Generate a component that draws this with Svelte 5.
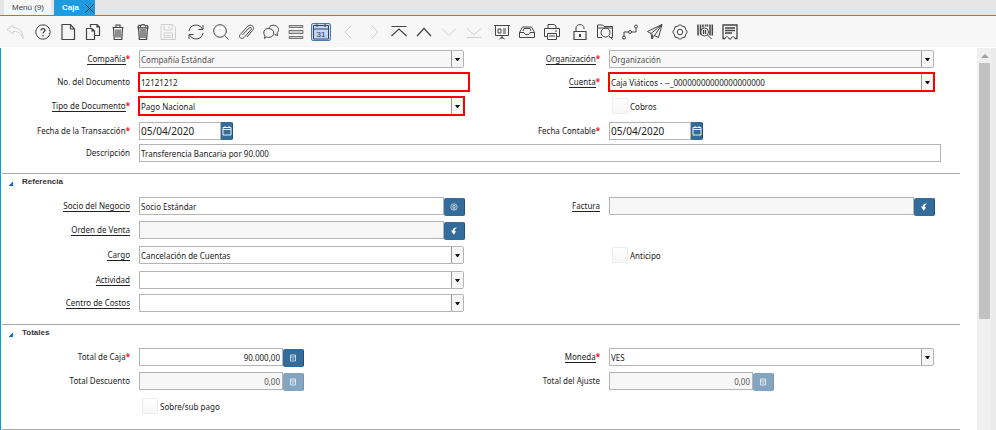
<script lang="ts">
type Field = {
	id: string;
	kind: 'combo' | 'text' | 'date' | 'check' | 'search' | 'amount';
	label: string;
	value?: string;
	link?: boolean;
	required?: boolean;
	disabled?: boolean;
	marked?: boolean;
	wide?: boolean;
	icon?: string;
};

type Section = { name: string; title?: string; rows: (Field | null)[][] };

type Tool = { name: string; icon: string; disabled?: boolean; active?: boolean };

const icons: Record<string, string> = {
	undo: '<path d="M6 1 0 5.500 6 10V7.500C11 7 14 9 16 15 16.500 8 12 3.500 6 3.500z"/>',
	help: '<circle cx="8" cy="8" r="7.200"/><path d="M6 6.500C6 4 10 4 10 6.300 10 8 8 7.700 8 9.500M8 11v1.300" stroke-width="1.300"/>',
	file: '<path d="M2 .5h8.500L14.500 5v10.500H2zM10.500 .5V5h4" stroke-width="1.200"/>',
	copy: '<path d="M5.500 3.500V.5H12L14.500 3v8.500H10M12 .5V3h2.500M1.500 4.500H7L9.500 7v8.500h-8zM7 4.500V7h2.500" stroke-width="1.200"/>',
	trash: '<path d="M2.500 3.500h11M6 3V1h4v2M3.500 4l.7 11.500h7.600L12.500 4M6 5.500v8M8 5.500v8M10 5.500v8" stroke-width="1.200"/>',
	trashAll: '<path d="M3 3.500C3 1 5 1 5.500 2 6 .2 10 .2 10.500 2 12 1 13 1.500 13 3.500M2.500 3.800h11M3.500 4l.9 11.500h7.200L12.500 4M6 5v9M8 5v9M10 5v9" stroke-width="1.200"/>',
	save: '<path d="M1 .5h11.500L15.500 3v12.500H1zM4 .5V6h8V.5M9 2v2.500M4 15.500V9h8.500v6.500M5 11.500h6M5 13.500h6"/>',
	refresh: '<path d="M1 7C2 0 11-1 14.500 5M15 1v4.500h-4.500M15 9C14 16 5 17 1.500 11M1 15v-4.500h4.500"/>',
	find: '<circle cx="7" cy="7" r="6.300"/><path d="m11.500 11.500 4 4"/>',
	attach: '<path d="M4.500 11 11 4c1.500-1.300 3.200.2 2 1.700L6 13.500c-2.500 2.500-6-.5-3.800-3L9.500 2.500c3.500-3.500 8 .5 5 4L9 13"/>',
	chat: '<path d="M6 4.500C6.500-.5 15.500.5 15.500 5.500c0 2-1 3-1.500 3.500l.5 2.500-3-1"/><path d="M1.500 14.500 2 12C-.5 8.500 1 4.500 5.500 4.500c7 0 7 9 0 9-1 0-1.500-.2-2-.5z"/>',
	grid: '<path d="M1 1.500h14v2H1zM1 6.500h14v3H1zM1 12.500h14v2H1z" fill="#ccc" stroke="#777" stroke-linejoin="round"/>',
	calendar: '<path d="M.5 1.500h15v13.500H.5zM.5 5h15M4 0v3M12 0v3"/><text x="8" y="13.300" font-family="Liberation Sans, sans-serif" font-size="8" text-anchor="middle" fill="#334" stroke="none">31</text>',
	prev: '<path d="M10.500 1.500 4 8l6.500 6.500"/>',
	next: '<path d="M5.500 1.500 12 8l-6.500 6.500"/>',
	first: '<path d="M.5 2.500h15M.5 12 8 5l7.500 7" stroke-width="1.200"/>',
	up: '<path d="M1 12 8 4.500l7 7.500" stroke-width="1.200"/>',
	down: '<path d="M1 4.500 8 11.500l7-7"/>',
	last: '<path d="M.5 4 8 11l7.500-7M.5 13.500h15"/>',
	report: '<path d="M0 1.500h16M1.500 1.500v10h13v-10M8 12v3M5.500 15l2.500-2 2.500 2M4 5h3v4H4zM9 5h3M9 7h3M9 9h3"/>',
	archive: '<path d="M.5 8.500 3.500 3h9l3 5.500v5H.5zM.5 8.500H5c.5 3 5.500 3 6 0h4.500M4 7l1-2.500h6L12 7"/>',
	print: '<path d="M4 4.500V.5h6L12 2v2.500M3.500 12.500h-3v-8h15v8h-3M3.500 9.500h9v6h-9zM5 12h6M11 7h2"/>',
	lock: '<path d="M4 7V4c0-4.500 8-4.500 8 0v1"/><path d="M2 7.500h12v8H2z" stroke-width="1.200"/><path d="M8 10v3" stroke-width="2"/>',
	zoom: '<path d="M.5 13.500V1h5L7 2.500h8.500v11h-3M.5 13.500H5M1 4h14"/><circle cx="8.500" cy="8.500" r="4.500"/><path d="m12 12 3.500 3.500"/>',
	workflow: '<circle cx="2" cy="13.500" r="1.500"/><circle cx="8" cy="8" r="1.500"/><circle cx="14" cy="2.500" r="1.500"/><path d="M2 12V8h4.500M9.500 8H14V4"/>',
	send: '<path d="M15 .5.500 7.500 4 9.500l1 5.500 2.500-3.500 4 2zM15 .5 4 9.500M15 .5 7.500 11.500M5 15l.5-4.500"/>',
	gear: '<circle cx="8" cy="8" r="2.700"/><path d="M8 .7 10 2.200 13 2.800 13.700 5.500 15.300 8 13.700 10.500 13 13.200 10 13.800 8 15.300 6 13.800 3 13.200 2.300 10.500.7 8 2.300 5.500 3 2.800 6 2.200z"/>',
	barcode: '<path d="M1 .5v11M3.500 .5v10M6 .5v3M8.500 .5v2M10.500 .5v2M13 .5v11M15.300 .5v11" stroke-width="1.500"/><circle cx="7.500" cy="8" r="4"/><path d="M6.500 6v4M8.500 6v4" stroke-width="1.300"/><path d="m10.500 11 4 4"/>',
	form: '<path d="M3 14.500H1V1h14v13.500h-2" stroke-width="1.300"/><path d="M3 4h10M3 6.500h10M3 9h7" stroke-width="1.300"/><path d="M3 15c0-3 4-3 4 0h2c0-3 4-3 4 0"/>'
};

const small: Record<string, string> = {
	date: '<path d="M1 1.500h8v7.500H1zM1 3.500h8M3 0v2M7 0v2" stroke-width=".9"/>',
	user: '<circle cx="5" cy="5" r="3.200" stroke-width=".6"/><path d="M4 3.500h2v2.500H4zM3.500 7h3" stroke-width=".6"/>',
	search: '<path d="M8 1.500C5 1.500 3.800 2.500 3.800 4.500H2L4.800 8.800 7 5.500 5.500 4.700C5.600 3.500 6.500 3 8 1.500z" fill="currentColor" stroke="none"/>',
	calc: '<path d="M2.500 2h5v6h-5zM2.500 4h5M4 6h2" stroke-width=".7"/>'
};

const tools: Tool[][] = [
	[{ name: 'Deshacer', icon: 'undo', disabled: true }],
	[
		{ name: 'Ayuda', icon: 'help' },
		{ name: 'Nuevo', icon: 'file' },
		{ name: 'Copiar', icon: 'copy' },
		{ name: 'Eliminar', icon: 'trash' },
		{ name: 'Eliminar selección', icon: 'trashAll' },
		{ name: 'Guardar', icon: 'save', disabled: true }
	],
	[
		{ name: 'Refrescar', icon: 'refresh' },
		{ name: 'Buscar', icon: 'find' },
		{ name: 'Adjuntos', icon: 'attach' },
		{ name: 'Chat', icon: 'chat' },
		{ name: 'Cuadrícula', icon: 'grid' },
		{ name: 'Historial', icon: 'calendar', active: true }
	],
	[
		{ name: 'Padre', icon: 'prev', disabled: true },
		{ name: 'Detalle', icon: 'next', disabled: true },
		{ name: 'Primero', icon: 'first' },
		{ name: 'Anterior', icon: 'up' },
		{ name: 'Siguiente', icon: 'down', disabled: true },
		{ name: 'Último', icon: 'last', disabled: true }
	],
	[
		{ name: 'Informe', icon: 'report' },
		{ name: 'Archivo', icon: 'archive' },
		{ name: 'Imprimir', icon: 'print' }
	],
	[
		{ name: 'Bloquear', icon: 'lock' },
		{ name: 'Visor', icon: 'zoom' },
		{ name: 'Flujo de trabajo', icon: 'workflow' },
		{ name: 'Solicitudes', icon: 'send' },
		{ name: 'Proceso', icon: 'gear' },
		{ name: 'Producto', icon: 'barcode' },
		{ name: 'Formulario', icon: 'form' }
	]
];

const sections: Section[] = [
	{
		name: 'header',
		rows: [
			[
				{ id: 'client', kind: 'combo', label: 'Compañía', value: 'Compañía Estándar', link: true, required: true, disabled: true },
				{ id: 'org', kind: 'combo', label: 'Organización', value: 'Organización', link: true, required: true, disabled: true }
			],
			[
				{ id: 'docno', kind: 'text', label: 'No. del Documento', value: '12121212', marked: true },
				{ id: 'account', kind: 'combo', label: 'Cuenta', value: 'Caja Viáticos - --_00000000000000000000', link: true, required: true, marked: true }
			],
			[
				{ id: 'doctype', kind: 'combo', label: 'Tipo de Documento', value: 'Pago Nacional', link: true, required: true, marked: true },
				{ id: 'receipt', kind: 'check', label: 'Cobros' }
			],
			[
				{ id: 'trxdate', kind: 'date', label: 'Fecha de la Transacción', value: '05/04/2020', required: true },
				{ id: 'acctdate', kind: 'date', label: 'Fecha Contable', value: '05/04/2020', required: true }
			],
			[{ id: 'description', kind: 'text', label: 'Descripción', value: 'Transferencia Bancaria por 90.000', wide: true }]
		]
	},
	{
		name: 'reference',
		title: 'Referencia',
		rows: [
			[
				{ id: 'partner', kind: 'search', label: 'Socio del Negocio', value: 'Socio Estándar', link: true, icon: 'user' },
				{ id: 'invoice', kind: 'search', label: 'Factura', value: '', link: true, disabled: true, icon: 'search' }
			],
			[{ id: 'order', kind: 'search', label: 'Orden de Venta', value: '', link: true, disabled: true, icon: 'search' }, null],
			[
				{ id: 'charge', kind: 'combo', label: 'Cargo', value: 'Cancelación de Cuentas', link: true },
				{ id: 'prepay', kind: 'check', label: 'Anticipo' }
			],
			[{ id: 'activity', kind: 'combo', label: 'Actividad', value: '', link: true }, null],
			[{ id: 'costcenter', kind: 'combo', label: 'Centro de Costos', value: '', link: true }, null]
		]
	},
	{
		name: 'totals',
		title: 'Totales',
		rows: [
			[
				{ id: 'total', kind: 'amount', label: 'Total de Caja', value: '90.000,00', required: true },
				{ id: 'currency', kind: 'combo', label: 'Moneda', value: 'VES', link: true, required: true }
			],
			[
				{ id: 'discount', kind: 'amount', label: 'Total Descuento', value: '0,00', disabled: true },
				{ id: 'writeoff', kind: 'amount', label: 'Total del Ajuste', value: '0,00', disabled: true }
			],
			[{ id: 'overunder', kind: 'check', label: 'Sobre/sub pago' }, null]
		]
	}
];
</script>

<svelte:head>
	<title>Caja</title>
</svelte:head>

{#snippet field(f: Field)}
	{#if f.kind === 'check'}
		<span></span>
		<div class="cell check">
			<input type="checkbox" id={f.id} />
			<label for={f.id}>{f.label}</label>
		</div>
	{:else}
		<label class="name" for={f.id}><span class:link={f.link}>{f.label}</span>{#if f.required}<b>*</b>{/if}</label>
		<div class="cell {f.kind}" class:wide={f.wide} class:marked={f.marked} class:disabled={f.disabled}>
			{#if f.kind === 'combo'}
				<select id={f.id} disabled={f.disabled}>
					<option>{f.value}</option>
				</select>
				<span class="arrow"></span>
			{:else}
				<input type="text" id={f.id} value={f.value} readonly={f.disabled} />
				{#if f.kind !== 'text'}
					<button type="button" aria-label="Abrir {f.label}" disabled={f.kind === 'amount' && f.disabled}>
						<svg viewBox="0 0 10 10">{@html small[f.icon ?? (f.kind === 'date' ? 'date' : 'calc')]}</svg>
					</button>
				{/if}
			{/if}
		</div>
	{/if}
{/snippet}

<div class="window">
	<nav class="tabs">
		<a href="#menu">Menú (9)</a>
		<a href="#caja" class="current">Caja</a>
		<button aria-label="Cerrar">
			<svg viewBox="0 0 10 10"><path d="M.5 .5l9 9M9.500 .5l-9 9" /></svg>
		</button>
	</nav>

	<div class="toolbar">
		{#each tools as group}
			<div class="group">
				{#each group as tool}
					<button class:active={tool.active} disabled={tool.disabled} aria-label={tool.name}>
						<svg viewBox="0 0 16 16">{@html icons[tool.icon]}</svg>
					</button>
				{/each}
			</div>
		{/each}
	</div>

	<div class="content">
		<form>
			{#each sections as section}
				<section>
					{#if section.title}
						<h2><i></i>{section.title}</h2>
					{/if}
					<div class="rows {section.name}">
						{#each section.rows as row}
							{#each row as f}
								{#if f}
									{@render field(f)}
								{:else}
									<span></span><span></span>
								{/if}
							{/each}
						{/each}
					</div>
				</section>
			{/each}
		</form>
		<div class="scrollbar">
			<i></i>
			<div class="thumb"></div>
		</div>
	</div>
</div>

<style>
	:global(body) {
		margin: 0;
		background: white;
		overflow: hidden;
	}

	.window {
		display: flex;
		flex-direction: column;
		height: 100vh;
		font-family: "Noto Sans", "Open Sans", sans-serif;
		font-size: 8px;
		color: #222;
	}

	button {
		display: flex;
		align-items: center;
		justify-content: center;
		flex: none;
		padding: 0;
		border: 0;
		background: none;
	}

	svg {
		fill: none;
		stroke: currentColor;
		overflow: visible;
	}

	/* tabs */
	.tabs {
		display: flex;
		flex: none;
		height: 15px;
		padding-left: 4px;
		background: #e6e6e6;
		border-bottom: 1px solid #2a9bd4;
		font-family: "Liberation Sans", Arial, sans-serif;
		line-height: 15px;
	}

	.tabs a {
		padding: 0 7px 0 8px;
		margin-right: 3px;
		background: #f7f7f7;
		color: #444;
		text-decoration: none;
	}

	.tabs .current {
		margin: 0;
		padding-right: 6px;
		background: #1e9bdf;
		color: white;
		font-weight: bold;
	}

	.tabs button {
		align-items: flex-end;
		width: 10px;
		padding-bottom: 2px;
		background: #1e9bdf;
		color: #223;
	}

	.tabs svg {
		width: 9px;
		height: 9px;
	}

	/* toolbar */
	.toolbar {
		display: flex;
		flex: none;
		align-items: center;
		gap: 3px;
		height: 31px;
		padding-left: 2px;
		background: #f7f7f7;
		color: #444;
	}

	.group {
		display: flex;
	}

	.group button {
		width: 25px;
		height: 20px;
		color: inherit;
	}

	.group svg {
		width: 16px;
		height: 16px;
	}

	.group button:disabled {
		color: #d0d0d0;
	}

	.group .active svg {
		padding: 0 1px;
		background: #bdd6fa;
		border: 1px solid #4a7ab8;
		border-radius: 2px;
	}

	/* form */
	.content {
		display: flex;
		flex: 1;
		min-height: 0;
		margin-top: 1px;
		border-left: 1px solid #009fdf;
	}

	form {
		flex: 1;
		overflow: hidden;
		padding: 2px 17px 0 1px;
	}

	section {
		border-bottom: 1px solid #aaa;
	}

	h2 {
		display: flex;
		align-items: center;
		height: 14px;
		margin: 0;
		padding-left: 7px;
		font: bold 8px "Liberation Sans", Arial, sans-serif;
		color: #333;
	}

	h2 i {
		width: 4px;
		height: 4px;
		margin: 5px 9px 0 0;
		background: linear-gradient(135deg, transparent 45%, #0a6cd0 45%);
	}

	.rows {
		display: grid;
		grid-template-columns: 128px minmax(0, 1fr) 127px minmax(0, 1fr);
		column-gap: 9px;
		padding-right: 26px;
	}

	.header {
		grid-template-rows: 23px 24px 25px 22px 18px;
		padding-bottom: 11px;
	}

	.reference {
		grid-template-rows: 24px 25px 25px 23px 18px;
		padding-top: 9px;
		padding-bottom: 12px;
	}

	.totals {
		grid-template-rows: 24px 25px 18px;
		padding-top: 9px;
		padding-bottom: 14px;
	}

	.name {
		line-height: 18px;
		text-align: right;
		white-space: nowrap;
	}

	.link {
		display: inline-block;
		line-height: 10px;
		border-bottom: 1px solid #222;
	}

	.name b {
		color: red;
	}

	.cell {
		position: relative;
		display: flex;
		height: 18px;
	}

	.wide {
		grid-column: 2 / -1;
		margin-right: -7px;
	}

	input,
	select {
		box-sizing: border-box;
		flex: 1;
		min-width: 0;
		height: 18px;
		margin: 0;
		padding: 0 2px 0 1px;
		border: 1px solid #b4b4b4;
		border-radius: 0;
		background: white;
		font: inherit;
		color: #222;
		outline: 0;
	}

	select {
		appearance: none;
		border-radius: 0 2px 2px 0;
		opacity: 1;
	}

	.disabled input,
	.disabled select {
		background: #f7f7f7;
		color: #555;
	}

	.arrow {
		position: absolute;
		top: 1px;
		right: 1px;
		bottom: 1px;
		display: flex;
		align-items: center;
		justify-content: center;
		width: 11px;
		background: #f7f7f7;
		border-left: 1px solid #999;
		pointer-events: none;
	}

	.arrow::after {
		content: "";
		width: 1px;
		border: 2px solid transparent;
		border-top: 3px solid #111;
		border-bottom: 0;
	}

	.marked input,
	.marked select {
		border-color: transparent;
		outline: 2px solid red;
		outline-offset: -1px;
		border-radius: 0;
	}

	.marked.text {
		margin-right: -5px;
	}

	.cell button {
		box-sizing: border-box;
		width: 21px;
		background: #336b9b;
		border-right: 1px solid #1d4f7b;
		border-radius: 2px;
		color: white;
	}

	.cell button:disabled {
		opacity: 0.6;
	}

	.cell svg {
		width: 10px;
		height: 10px;
	}

	.search button,
	.amount button {
		margin-top: 1px;
		height: 18px;
	}

	.search {
		margin-right: -1px;
	}

	.date input {
		flex: 0 0 82px;
		font-size: 10px;
	}

	.date button {
		width: 12px;
		border-radius: 0 2px 2px 0;
	}

	.amount input {
		flex: 0 0 144px;
		text-align: right;
	}

	.check {
		align-items: center;
		gap: 2px;
		padding-left: 3px;
	}

	.check input {
		appearance: none;
		flex: none;
		width: 16px;
		height: 16px;
		border-color: #eee;
		background: linear-gradient(white, #f7f7f7);
	}

	/* scrollbar */
	.scrollbar {
		flex: none;
		box-sizing: border-box;
		width: 19px;
		padding: 6px 6px 0 2px;
		background: #f0f0f0;
		border-right: 5px solid #ebebeb;
	}

	.scrollbar i {
		display: block;
		width: 0;
		margin: 0 2px 5px;
		border: 4px solid transparent;
		border-top: 0;
		border-bottom-color: #a0a0a0;
	}

	.thumb {
		width: 11px;
		height: 68%;
		background: #c1c1c1;
	}
</style>
